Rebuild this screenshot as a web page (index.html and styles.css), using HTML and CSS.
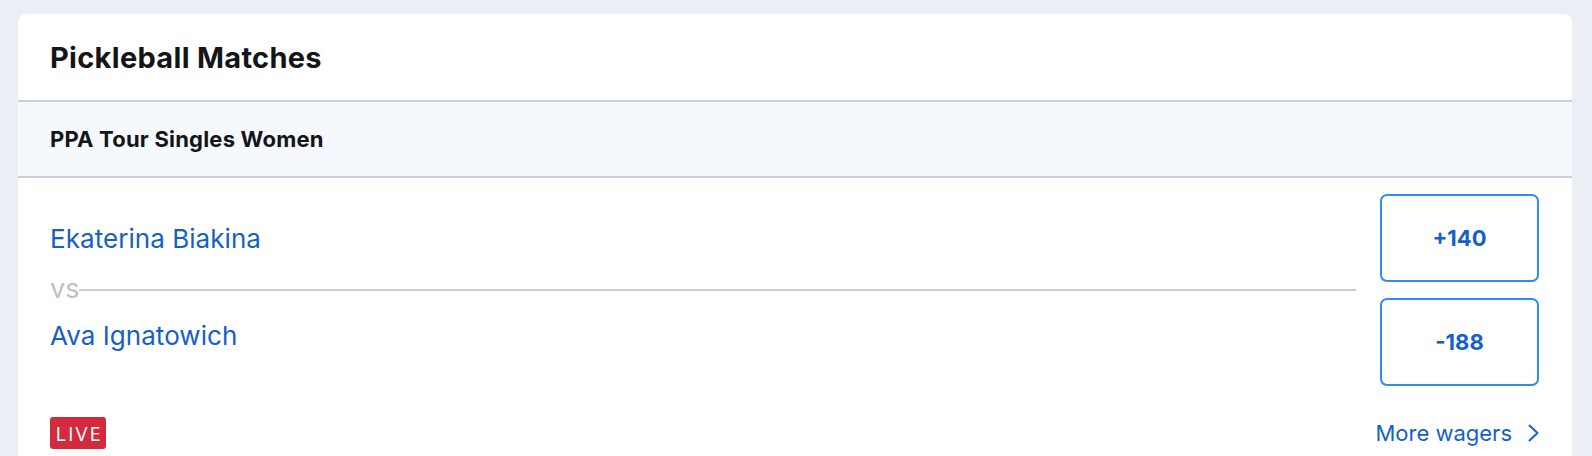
FILE: index.html
```html
<!DOCTYPE html>
<html>
<head>
<meta charset="utf-8">
<link rel="stylesheet" href="styles.css">
</head>
<body>
<div class="card">
  <div class="card-header"><h1 class="title">Pickleball Matches</h1></div>
  <div class="league"><h2 class="league-name">PPA Tour Singles Women</h2></div>
  <div class="event">
    <div class="matchup">
      <div class="teams">
        <div class="team team-1">Ekaterina Biakina</div>
        <div class="vs"><span class="vs-text">vs</span><span class="vs-line"></span></div>
        <div class="team team-2">Ava Ignatowich</div>
      </div>
      <div class="odds">
        <button class="odd">+140</button>
        <button class="odd">-188</button>
      </div>
    </div>
    <div class="event-footer">
      <span class="live">LIVE</span>
      <a class="more" href="#">More wagers
        <svg class="chev" width="11" height="18" viewBox="0 0 11 18"><path d="M1.5 1.5 L9.5 9 L1.5 16.5" fill="none" stroke="#1663cf" stroke-width="2" stroke-linecap="round" stroke-linejoin="round"/></svg>
      </a>
    </div>
  </div>
</div>
</body>
</html>
```

FILE: styles.css
```css
html, body {
  margin: 0;
  padding: 0;
}
body {
  background: #eaeef5;
  width: 1592px;
  height: 456px;
  overflow: hidden;
  padding: 14px 20px 0 18px;
  box-sizing: border-box;
  font-family: Inter, "Liberation Sans", sans-serif;
}
.card {
  background: #ffffff;
  border-radius: 8px 8px 0 0;
  height: 442px;
  overflow: hidden;
}
.card-header {
  height: 86px;
  display: flex;
  align-items: center;
  padding-left: 32px;
  border-bottom: 2px solid #c8d0dc;
}
.title {
  margin: 0;
  font-size: 29px;
  font-weight: 700;
  color: #141517;
  letter-spacing: 0.3px;
}
.league {
  height: 74px;
  display: flex;
  align-items: center;
  padding-left: 32px;
  background: #f5f8fd;
  border-bottom: 2px solid #c8d0dc;
}
.league-name {
  margin: 0;
  font-size: 22px;
  font-weight: 700;
  color: #141517;
  letter-spacing: 0.2px;
}
.event {
  padding: 16px 33px 0 32px;
}
.matchup {
  display: flex;
  gap: 24px;
}
.teams {
  flex: 1;
  display: flex;
  flex-direction: column;
}
.team {
  font-size: 26px;
  color: #1560c8;
  display: flex;
  align-items: center;
  letter-spacing: 0.05px;
}
.team-1 { height: 88px; }
.team-2 { height: 75px; }
.vs {
  height: 16px;
  display: flex;
  align-items: center;
}
.vs-text {
  font-size: 27px;
  color: #b9c2cc;
  line-height: 16px;
  position: relative;
  top: -1px;
}
.vs-line {
  flex: 1;
  height: 2px;
  background: #c5cdd8;
}
.odds {
  width: 159px;
  display: flex;
  flex-direction: column;
  gap: 16px;
}
.odd {
  height: 88px;
  border: 2px solid #2f8cf6;
  border-radius: 7px;
  background: #fff;
  font-family: inherit;
  font-size: 22px;
  font-weight: 700;
  color: #1560c8;
  cursor: pointer;
}
.event-footer {
  margin-top: 31px;
  height: 32px;
  display: flex;
  align-items: center;
  justify-content: space-between;
}
.live {
  background: #d42a3d;
  color: #fff;
  border-radius: 3px;
  width: 56px;
  height: 32px;
  display: flex;
  align-items: center;
  justify-content: center;
  font-family: "Open Sans", sans-serif;
  font-size: 20px;
  letter-spacing: 2px;
  box-sizing: border-box;
  padding-left: 2px;
}
.more {
  display: flex;
  align-items: center;
  gap: 16px;
  font-size: 22px;
  color: #1560c8;
  text-decoration: none;
}
.chev { display: block; }
```
